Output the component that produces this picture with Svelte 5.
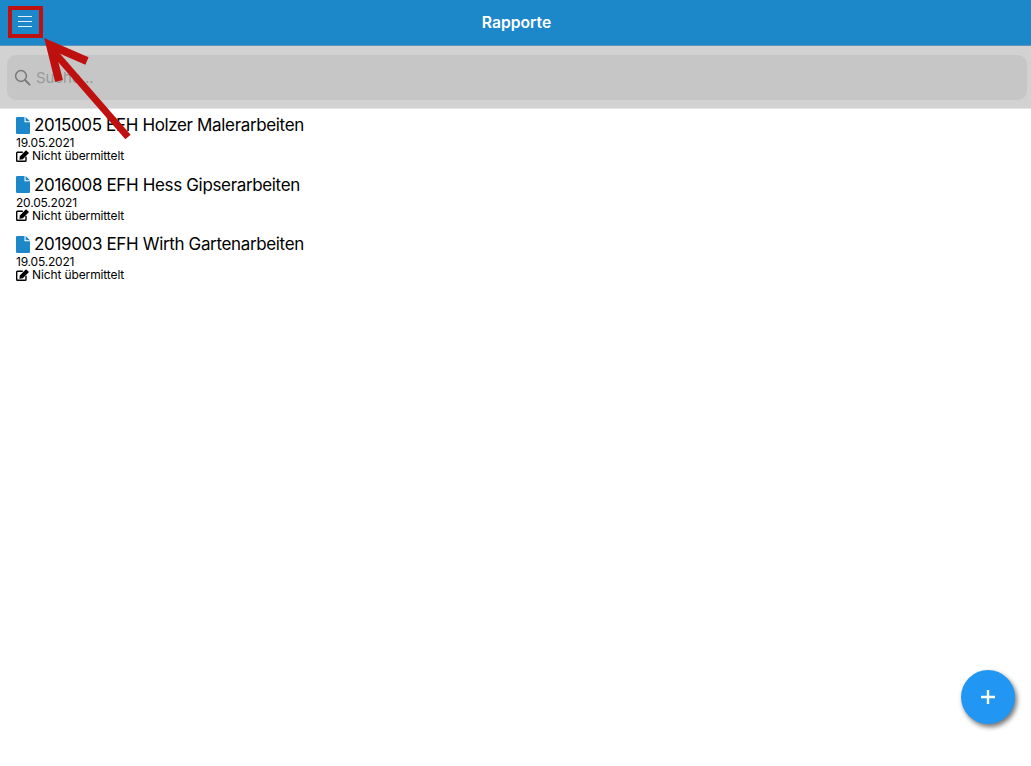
<script>
    const rapporte = [
        { titel: "2015005 EFH Holzer Malerarbeiten", datum: "19.05.2021", status: "Nicht übermittelt" },
        { titel: "2016008 EFH Hess Gipserarbeiten", datum: "20.05.2021", status: "Nicht übermittelt" },
        { titel: "2019003 EFH Wirth Gartenarbeiten", datum: "19.05.2021", status: "Nicht übermittelt" }
    ];
</script>

<main>
    <header>
        <button class="menu" aria-label="Menü">
            <svg width="14" height="11" viewBox="0 0 14 11">
                <path d="M0 .5h14M0 5.5h14M0 10.5h14" stroke="#e4f1fa" stroke-width="1" fill="none" />
            </svg>
        </button>
        <h1>Rapporte</h1>
    </header>

    <section class="suche">
        <div class="feld">
            <svg width="17" height="17" viewBox="0 0 17 17">
                <circle cx="7" cy="7" r="5.4" stroke="#777" stroke-width="1.5" fill="none" />
                <path d="M11 11l4.6 4.6" stroke="#777" stroke-width="1.8" stroke-linecap="round" />
            </svg>
            <span>Suche...</span>
        </div>
    </section>

    <ul>
        {#each rapporte as r}
            <li>
                <div class="titel">
                    <svg width="14" height="17" viewBox="0 0 14 17">
                        <path d="M1.2 0H8.5V5.2H14V15.8Q14 17 12.8 17H1.2Q0 17 0 15.8V1.2Q0 0 1.2 0ZM9.6 0L14 4.2H9.6Z" fill="#1c87c9" />
                    </svg>
                    <span>{r.titel}</span>
                </div>
                <div class="datum">{r.datum}</div>
                <div class="status">
                    <svg width="13" height="12" viewBox="0 0 13 12">
                        <path d="M10 6.8V10.4Q10 11.2 9.2 11.2H1.4Q.7 11.2 .7 10.4V3Q.7 2.2 1.4 2.2H6.8" stroke="#000" stroke-width="1.4" fill="none" />
                        <path d="M3.8 6.6L10 .2 13 3 6.8 9.2 3.4 9.8Z" fill="#000" />
                    </svg>
                    <span>{r.status}</span>
                </div>
            </li>
        {/each}
    </ul>

    <button class="fab" aria-label="Neu">
        <svg width="16" height="16" viewBox="0 0 16 16">
            <path d="M8 1v14M1 8h14" stroke="#fff" stroke-width="2.4" stroke-linecap="butt" />
        </svg>
    </button>

    <!-- rote Markierung aus der Anleitung -->
    <div class="rahmen"></div>
    <svg class="pfeil" width="140" height="145" viewBox="0 0 140 145">
        <path d="M128 137L54 52" stroke="#bf1010" stroke-width="7" fill="none" />
        <path d="M59 81L50 45 87 61" stroke="#bf1010" stroke-width="8" fill="none" />
    </svg>
</main>

<style>
    :global(body) { margin: 0; background: #fff; }

    main {
        position: relative;
        height: 766px;
        overflow: hidden;
        font-family: Inter, "Liberation Sans", sans-serif;
        color: #000;
    }

    header {
        height: 46px;
        background: #1c87c9;
        border-bottom: 1px solid #5d93b5;
        box-sizing: border-box;
        display: flex;
        align-items: center;
        justify-content: center;
        position: relative;
    }
    h1 { margin: 0; padding-left: 2px; font-size: 15.7px; font-weight: 600; color: #fff; }

    .menu {
        position: absolute;
        left: 18px;
        top: 16px;
        padding: 0;
        border: none;
        background: none;
        display: flex;
    }

    .suche {
        background: #d2d2d2;
        height: 63px;
        padding: 9px 4px 8px 7px;
        box-sizing: border-box;
        border-bottom: 1px solid #e4e4e4;
    }
    .feld {
        height: 45px;
        background: #c6c6c6;
        border-radius: 9px;
        display: flex;
        align-items: center;
        gap: 5px;
        padding-left: 7px;
        box-sizing: border-box;
    }
    .feld span { font-size: 15px; color: #999; }

    ul { list-style: none; margin: 0; padding: 7px 0 0 16px; }
    li { height: 59.5px; }

    .titel { display: flex; align-items: center; gap: 4px; height: 18px; font-size: 17px; letter-spacing: -0.35px; }
    .datum { font-size: 12px; line-height: 14px; margin-top: 2px; letter-spacing: -0.2px; }
    .status { display: flex; align-items: center; gap: 3px; margin-top: -1px; font-size: 12px; line-height: 13px; letter-spacing: -0.12px; }

    .fab {
        position: absolute;
        left: 961px;
        top: 670px;
        width: 54px;
        height: 54px;
        padding: 0;
        border: none;
        border-radius: 50%;
        background: #2196f3;
        box-shadow: 2px 3px 5px rgba(0, 0, 0, 0.55);
        display: flex;
        align-items: center;
        justify-content: center;
    }

    .rahmen {
        position: absolute;
        left: 8px;
        top: 6px;
        width: 35px;
        height: 32px;
        border: 4px solid #bf1010;
        box-sizing: border-box;
    }
    .pfeil { position: absolute; left: 0; top: 0; }
</style>
